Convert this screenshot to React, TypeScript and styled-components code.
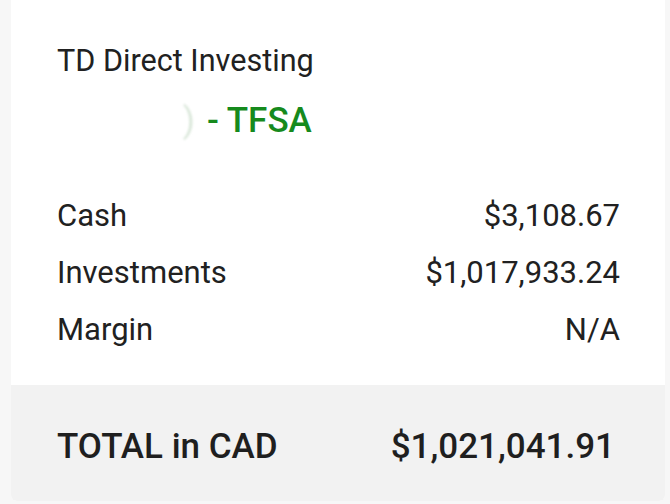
import React from 'react';
import styled, { createGlobalStyle } from 'styled-components';

const GlobalStyle = createGlobalStyle`
  html, body {
    margin: 0;
    padding: 0;
    background: #f7f7f7;
    font-family: Roboto, "Noto Sans", Arial, sans-serif;
  }
`;

const Page = styled.div`
  width: 670px;
  height: 504px;
  padding: 0 5px 3px 11px;
  box-sizing: border-box;
  display: flex;
`;

const Card = styled.div`
  flex: 1;
  display: flex;
  flex-direction: column;
  background: #ffffff;
  border-radius: 0 0 6px 6px;
  overflow: hidden;
`;

const Body = styled.div`
  padding: 44px 45px 0 46px;
  height: 385px;
  box-sizing: border-box;
`;

const Institution = styled.div`
  font-size: 30.6px;
  line-height: 34px;
  color: #212121;
`;

const Account = styled.div`
  margin-top: 23px;
  font-size: 35px;
  line-height: 40px;
  font-weight: 500;
  color: #168a1d;
  display: flex;
  align-items: center;
`;

const Masked = styled.span`
  display: inline-block;
  width: 150px;
  color: #dbe8db;
  text-align: right;
  padding-right: 12px;
  box-sizing: border-box;
  font-weight: 400;
  filter: blur(0.8px);
`;

const Rows = styled.div`
  margin-top: 46px;
  display: flex;
  flex-direction: column;
`;

const Row = styled.div`
  display: flex;
  justify-content: space-between;
  font-size: 31px;
  line-height: 57px;
  color: #212121;
`;

const Footer = styled.div`
  flex: 1;
  background: #f2f2f2;
  display: flex;
  align-items: center;
  justify-content: space-between;
  padding: 8px 50px 0 46px;
  font-size: 35px;
  line-height: 40px;
  font-weight: 500;
  color: #1f1f1f;
`;

const rows = [
  { label: 'Cash', value: '$3,108.67' },
  { label: 'Investments', value: '$1,017,933.24' },
  { label: 'Margin', value: 'N/A' },
];

export default function App() {
  return (
    <>
      <GlobalStyle />
      <Page>
        <Card>
          <Body>
            <Institution>TD Direct Investing</Institution>
            <Account>
              <Masked>)</Masked>- TFSA
            </Account>
            <Rows>
              {rows.map((r) => (
                <Row key={r.label}>
                  <span>{r.label}</span>
                  <span>{r.value}</span>
                </Row>
              ))}
            </Rows>
          </Body>
          <Footer>
            <span>TOTAL in CAD</span>
            <span>$1,021,041.91</span>
          </Footer>
        </Card>
      </Page>
    </>
  );
}
